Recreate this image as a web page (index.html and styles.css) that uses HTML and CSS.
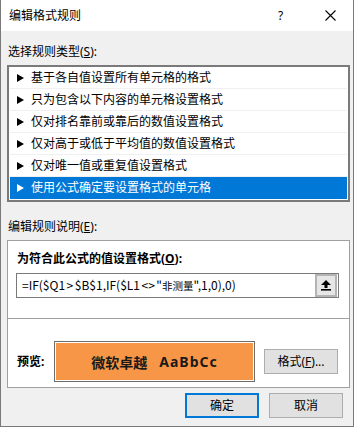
FILE: index.html
```html
<!DOCTYPE html>
<html>
<head>
<meta charset="utf-8" />
<title>编辑格式规则</title>
<link rel="stylesheet" href="styles.css">
</head>
<body>

<div class="dialog">
	<div class="titlebar">
		<span class="title">编辑格式规则</span>
		<span class="help">?</span>
		<span class="close"><svg width="11" height="11" viewBox="0 0 11 11"><path d="M0.5 0.5L10.5 10.5M10.5 0.5L0.5 10.5" stroke="#000" stroke-width="1.1" fill="none"/></svg></span>
	</div>

	<div class="content">
		<div class="label">选择规则类型(<u>S</u>):</div>
		<ul class="rules">
			<li><i class="arrow"></i>基于各自值设置所有单元格的格式</li>
			<li><i class="arrow"></i>只为包含以下内容的单元格设置格式</li>
			<li><i class="arrow"></i>仅对排名靠前或靠后的数值设置格式</li>
			<li><i class="arrow"></i>仅对高于或低于平均值的数值设置格式</li>
			<li><i class="arrow"></i>仅对唯一值或重复值设置格式</li>
			<li class="active"><i class="arrow"></i>使用公式确定要设置格式的单元格</li>
		</ul>

		<div class="label label2">编辑规则说明(<u>E</u>):</div>
		<div class="panel">
			<div class="panel-top">
				<div class="bold">为符合此公式的值设置格式(<u>O</u>):</div>
				<div class="formula">
					<span class="ftext">=IF($Q1<span class="op">&gt;</span>$B$1,IF($L1<span class="op">&lt;&gt;</span>"<span class="cjk">非测量</span>",1,0),0)</span>
					<span class="pick"><svg width="10" height="11" viewBox="0 0 10 11"><path d="M5 0L10 5H6.5V8H3.5V5H0Z" fill="#000"/><rect x="0" y="9" width="10" height="1.6" fill="#000"/></svg></span>
				</div>
			</div>
			<div class="panel-bottom">
				<span class="bold plabel">预览:</span>
				<div class="preview"><div class="swatch">微软卓越<span class="latin">AaBbCc</span></div></div>
				<span class="btn">格式(<u>F</u>)...</span>
			</div>
		</div>

		<div class="actions">
			<span class="btn primary">确定</span>
			<span class="btn">取消</span>
		</div>
	</div>
</div>

</body>
</html>
```

FILE: styles.css
```css
* { padding: 0; margin: 0; box-sizing: border-box; }
li { list-style: none; }

body { background: #fff; font-family: "Noto Sans", "Noto Sans CJK SC", sans-serif; font-size: 12px; color: #000; }

.dialog { width: 354px; height: 427px; border: 1px solid #7a7a7a; border-top: none; background: #f0f0f0; }

.titlebar { height: 31px; background: #fff; display: flex; align-items: center; padding-left: 8px; }
.titlebar .title { flex: 1; font-size: 12px; line-height: 16px; }
.titlebar .help { width: 14px; font-size: 12px; margin-right: 33px; }
.titlebar .close { width: 11px; height: 11px; margin-right: 17px; display: flex; }

.content { padding: 13px 3px 0 6px; }
.label { line-height: 16px; height: 16px; margin-bottom: 5px; padding-left: 1px; }
.label2 { margin-top: 17px; }

.rules { height: 137px; border: 2px solid #7a7a7a; background: #fff; padding: 0 1px; }
.rules li { height: 22px; border-bottom: 1px solid #f0f0f0; display: flex; align-items: center; line-height: 16px; }
.rules li.active { background: #0078d7; color: #fff; border-bottom-color: #0078d7; }
.arrow { width: 0; height: 0; border-left: 7px solid #000; border-top: 4px solid transparent; border-bottom: 4px solid transparent; margin: 0 7px 0 7px; }
.active .arrow { border-left-color: #fff; }

.panel { height: 148px; border: 1px solid #a0a0a0; background: #fff; }
.panel-top { height: 78px; border-bottom: 1px solid #a0a0a0; padding: 10px 10px 0 8px; }
.bold { font-weight: bold; line-height: 16px; padding-left: 1px; }
.formula { margin-top: 6px; height: 25px; border: 1px solid #7a7a7a; display: flex; align-items: center; padding: 1px; }
.ftext { flex: 1; padding-left: 4px; line-height: 16px; font-family: "Noto Sans CJK SC", sans-serif; font-size: 12px; }
.ftext .op { padding: 0 1.5px; }
.ftext .cjk { font-size: 10.5px; }
.pick { width: 22px; height: 23px; background: #e6e6e6; border: 2px solid #b4b4b4; display: flex; align-items: center; justify-content: center; }

.panel-bottom { display: flex; align-items: center; padding: 22px 0 0 8px; }
.plabel { width: 38px; }
.preview { width: 201px; height: 41px; border: 1px solid #6d6d6d; padding: 1px; margin-right: 9px; }
.swatch { height: 100%; background: #f79646; color: #1a1a1a; font-weight: bold; font-size: 14px; display: flex; align-items: center; justify-content: center; }
.swatch .latin { margin-left: 12px; letter-spacing: 1px; }

.btn { width: 74px; height: 25px; background: #e1e1e1; border: 1px solid #adadad; display: flex; align-items: center; justify-content: center; line-height: 16px; }
.btn.primary { border: 2px solid #0078d7; }

.actions { display: flex; justify-content: flex-end; gap: 10px; margin-top: 5px; padding-right: 7px; }
```
